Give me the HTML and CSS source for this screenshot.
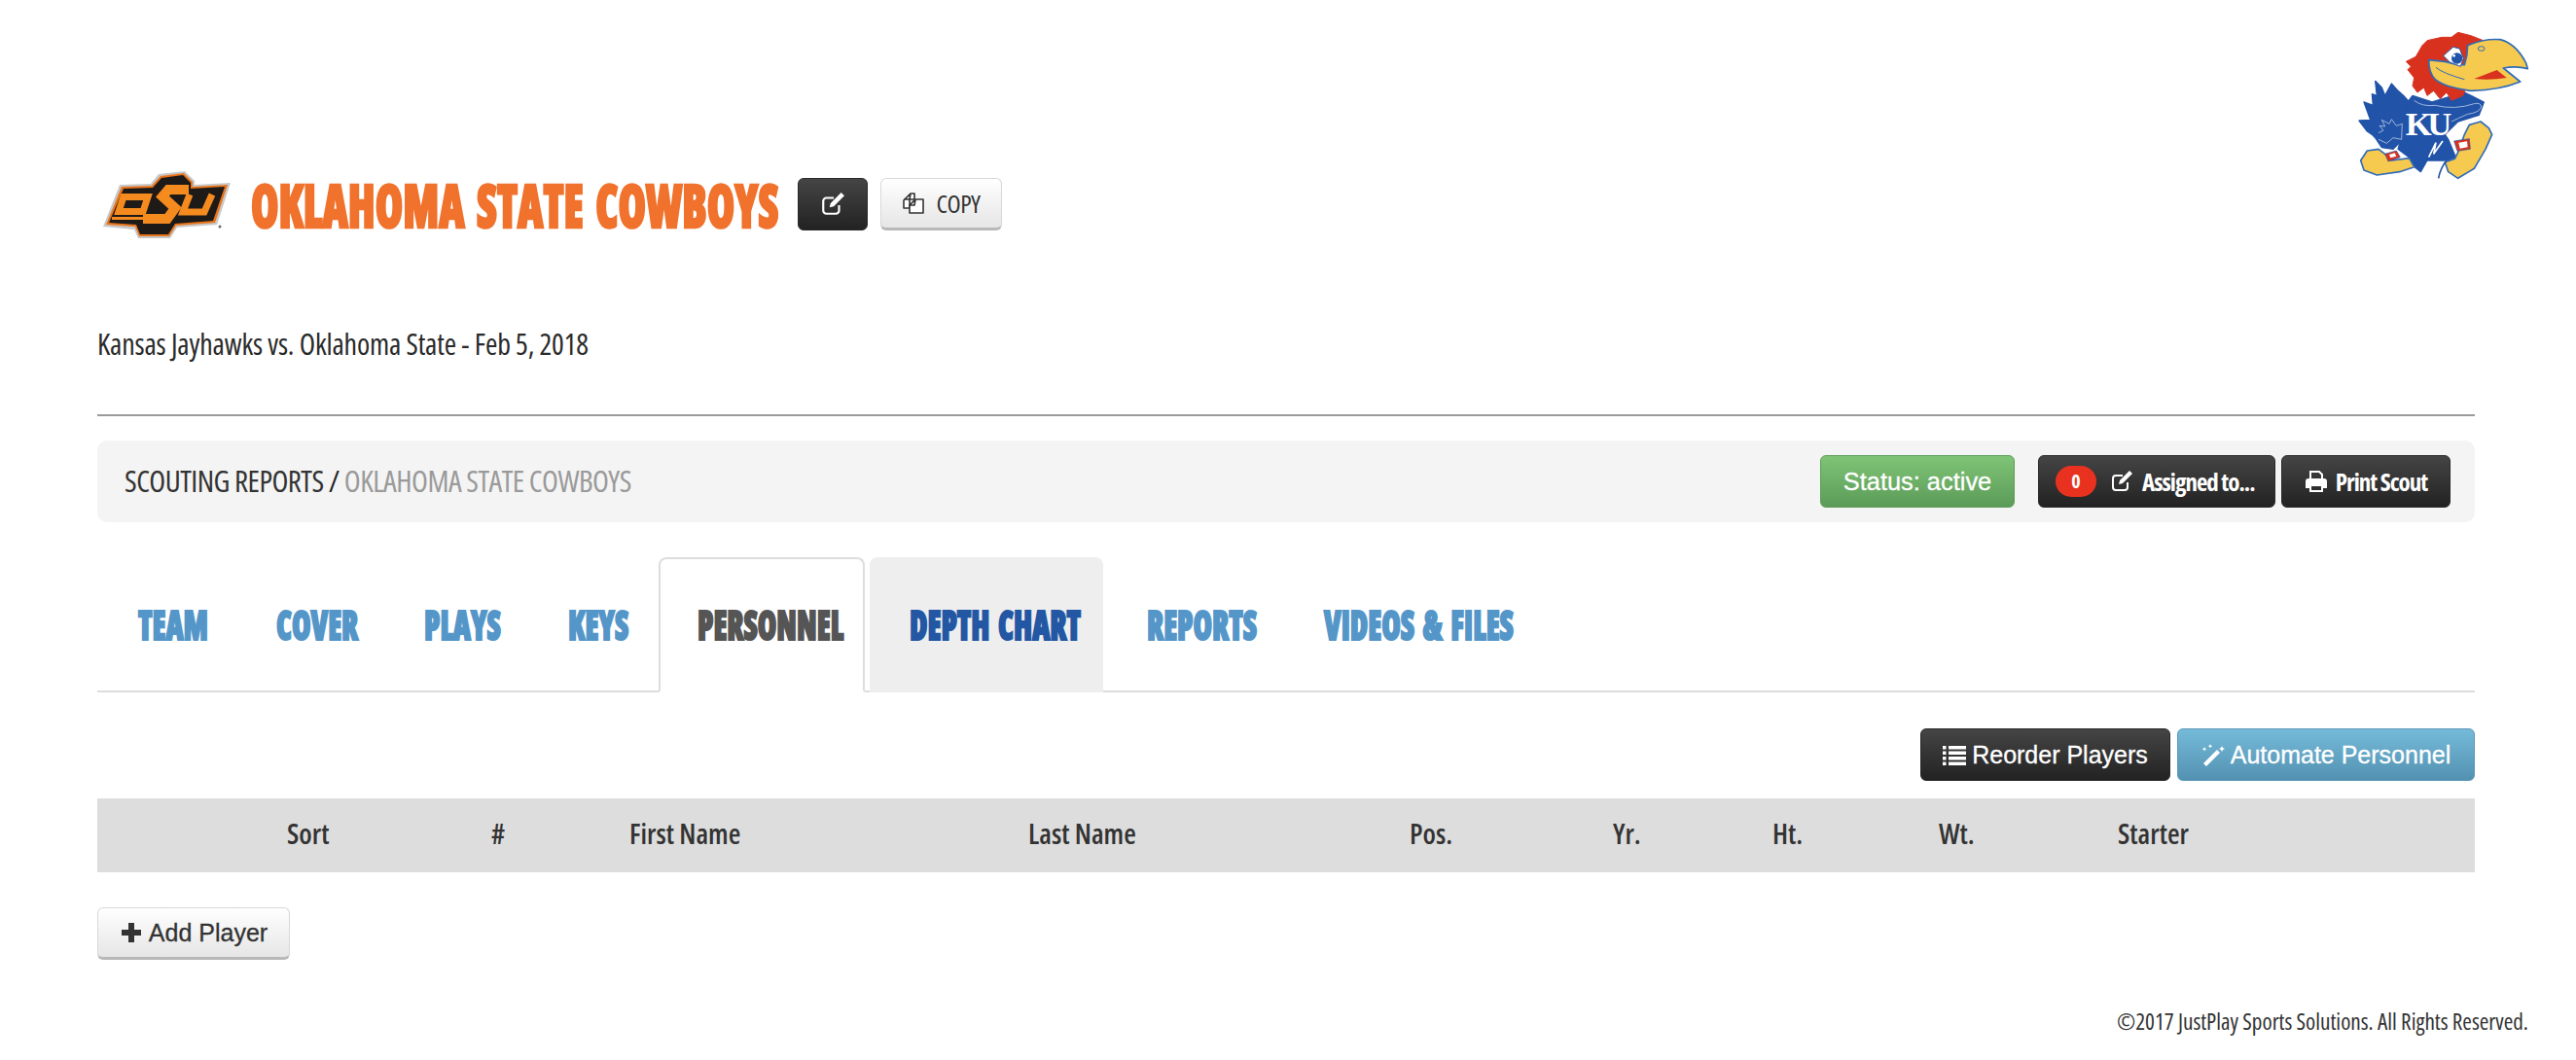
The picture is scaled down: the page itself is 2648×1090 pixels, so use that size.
FILE: index.html
```html
<!DOCTYPE html>
<html lang="en">
<head>
  <meta charset="UTF-8">
  <title>Oklahoma State Cowboys · Scouting Report</title>
  <link rel="stylesheet" href="styles.css">
</head>
<body>
  <div class="opponent-logo">
    <svg class="ku-logo" viewBox="0 0 720 570">
      <!-- tail -->
      <path d="M185 220 L205 240 L215 265 L235 228 L255 250 L275 268 L290 285 L280 330 L270 400 L240 430 L205 425 L185 395 L175 385 L160 375 L135 342 L170 340 L150 285 L178 295 L175 260 L190 265 Z" fill="#2153a8" stroke="#2153a8" stroke-width="4" stroke-linejoin="round"/>
      <!-- body -->
      <path d="M285 285 L300 265 L360 285 L460 255 L520 285 L505 325 L440 345 L400 385 L410 400 L435 460 L395 465 L345 465 L325 500 L300 480 L295 460 L255 430 L270 380 Z" fill="#2153a8" stroke="#2153a8" stroke-width="4" stroke-linejoin="round"/>
      <path d="M195 380 L210 372 L198 358 L215 360 L205 340 L228 352 L235 338 L250 358 L268 352 L266 400 L240 395 L220 412 L195 400" fill="none" stroke="#b9c9e6" stroke-width="2.500"/>
      <path d="M305 280 Q330 300 370 295 Q430 310 490 290 Q510 285 512 300 Q505 318 470 322 Q440 335 420 345" fill="none" stroke="#b9c9e6" stroke-width="2.500"/>
      <path d="M350 455 L372 410 L365 445 L393 405" fill="none" stroke="#fff" stroke-width="5"/>
      <text class="ku-text" x="278" y="388">KU</text>
      <!-- left foot -->
      <path d="M140 465 L160 435 L195 430 L215 445 L235 465 L290 458 L305 485 L260 500 L190 510 L150 495 Z" fill="#f6c94f" stroke="#2f6cb8" stroke-width="5" stroke-linejoin="round"/>
      <path d="M215 445 L250 435 L262 455 L225 468 Z" fill="#d8321f" stroke="#2153a8" stroke-width="2"/>
      <path d="M228 447 L245 442 L250 452 L232 457 Z" fill="#fff"/>
      <!-- right foot -->
      <path d="M400 470 L430 460 L440 440 L460 385 L475 355 L510 345 L535 365 L545 385 L525 430 L490 490 L440 520 L410 500 Z" fill="#f6c94f" stroke="#2f6cb8" stroke-width="5" stroke-linejoin="round"/>
      <path d="M428 405 L475 398 L478 430 L438 436 Z" fill="#d8321f" stroke="#2153a8" stroke-width="2"/>
      <path d="M442 410 L468 406 L470 424 L446 428 Z" fill="#fff"/>
      <path d="M405 465 Q385 490 380 520" fill="none" stroke="#2153a8" stroke-width="5"/>
      <!-- head feathers -->
      <path d="M280 160 L310 145 L330 110 L345 95 L390 85 L420 85 L440 70 L480 80 L518 95 L470 130 L460 200 L470 230 L455 265 L420 280 L405 255 L385 275 L365 250 L345 265 L335 240 L315 255 L300 235 L305 210 L285 185 L295 175 Z" fill="#d8321f" stroke="#d8321f" stroke-width="3" stroke-linejoin="round"/>
      <!-- beak -->
      <path d="M470 110 Q520 88 570 92 Q620 105 650 165 L655 182 Q620 172 580 180 L632 222 Q570 248 480 250 Q400 240 370 215 Q350 195 350 155 L400 160 L440 170 L460 170 Q470 140 470 110 Z" fill="#f6c94f" stroke="#2f6cb8" stroke-width="5" stroke-linejoin="round"/>
      <path d="M490 213 L560 186 L590 210 Q540 218 490 213 Z" fill="#d8321f"/>
      <path d="M372 178 Q390 195 460 215" fill="none" stroke="#2f6cb8" stroke-width="3"/>
      <ellipse cx="512" cy="120" rx="10" ry="7" fill="none" stroke="#2f6cb8" stroke-width="3"/>
      <!-- eye -->
      <path d="M395 142 L425 115 L445 120 L457 150 L448 175 L415 162 Z" fill="#fff" stroke="#2153a8" stroke-width="3"/>
      <circle cx="437" cy="150" r="17" fill="#2153a8"/>
      <circle cx="428" cy="142" r="4" fill="#fff"/>
    </svg>
  </div>

  <main class="page">
    <div class="team-row">
      <svg class="osu-logo" viewBox="0 0 145 80">
        <path d="M6 62 L23 19 L55 18 L63 8 L90 5 L100 15 L100 19 L137 17 L123 60 L82 63 L75 74 L42 74 L38 65 Z" fill="#c8c8c8"/>
        <path d="M9 60 L25 21 L56 20 L65 10 L89 7 L98 16 L98 21 L134 19 L121 58 L81 61 L74 72 L43 72 L39 62 Z" fill="#e8751c"/>
        <path d="M12 58 L27 23 L57 22 L66 12 L88 9 L96 17 L96 23 L131 21 L119 56 L80 59 L73 70 L44 70 L40 60 Z" fill="#1d1a18"/>
        <path d="M27 31.500 H52 L47 46.500 H22 Z" fill="none" stroke="#f58a1f" stroke-width="7"/>
        <path d="M94 24 H73 L67 31 L80 43 L72 54 H47" fill="none" stroke="#f58a1f" stroke-width="10"/>
        <path d="M15 53.500 H48" fill="none" stroke="#f58a1f" stroke-width="3"/>
        <path d="M95 29 L88 47 H110 L118 29" fill="none" stroke="#f58a1f" stroke-width="7"/>
        <circle cx="126" cy="62" r="1.500" fill="#666"/>
      </svg>
      <h1 class="team-name"><span>OKLAHOMA STATE COWBOYS</span></h1>
      <button class="btn btn-dark btn-edit">
        <svg class="icon" viewBox="0 0 24 24"><path d="M18 13v5a3 3 0 0 1-3 3H6a3 3 0 0 1-3-3V9a3 3 0 0 1 3-3h7" fill="none" stroke="currentColor" stroke-width="2"/><path d="M9 15l1-4L20 1l3 3-10 10z" fill="currentColor"/></svg>
      </button>
      <button class="btn btn-light btn-copy">
        <svg class="icon" viewBox="0 0 24 24"><path d="M9 2h4v6H8v9H2V9z M9 2L8 8H2" fill="#fff" stroke="currentColor" stroke-width="1.600" stroke-linejoin="round"/><path d="M14 8h8v14H8v-8z M14 8l-1 6H8" fill="#fff" stroke="currentColor" stroke-width="1.600" stroke-linejoin="round"/></svg>
        COPY
      </button>
    </div>

    <p class="game-line">Kansas Jayhawks vs. Oklahoma State - Feb 5, 2018</p>
    <hr class="rule">

    <div class="crumb-bar">
      <div class="crumbs">SCOUTING REPORTS <span class="slash">/</span> <span class="crumb-current">OKLAHOMA STATE COWBOYS</span></div>
      <button class="btn btn-green btn-status">Status: active</button>
      <button class="btn btn-dark btn-narrow btn-assigned">
        <span class="count">0</span>
        <svg class="icon" viewBox="0 0 24 24"><path d="M18 13v5a3 3 0 0 1-3 3H6a3 3 0 0 1-3-3V9a3 3 0 0 1 3-3h7" fill="none" stroke="currentColor" stroke-width="2"/><path d="M9 15l1-4L20 1l3 3-10 10z" fill="currentColor"/></svg>
        Assigned to...
      </button>
      <button class="btn btn-dark btn-narrow btn-print">
        <svg class="icon" viewBox="0 0 24 24"><path d="M6 2h9l3 3v5H6z M6 16h12v6H6z" fill="none" stroke="currentColor" stroke-width="2"/><path d="M1 12a3 3 0 0 1 3-3h16a3 3 0 0 1 3 3v7h-4v-4H5v4H1z" fill="currentColor"/></svg>
        Print Scout
      </button>
    </div>

    <nav class="tabs">
      <a class="tab"><span>TEAM</span></a>
      <a class="tab"><span>COVER</span></a>
      <a class="tab"><span>PLAYS</span></a>
      <a class="tab"><span>KEYS</span></a>
      <a class="tab active"><span>PERSONNEL</span></a>
      <a class="tab hover"><span>DEPTH CHART</span></a>
      <a class="tab"><span>REPORTS</span></a>
      <a class="tab"><span>VIDEOS &amp; FILES</span></a>
    </nav>

    <div class="actions">
      <button class="btn btn-dark btn-action btn-reorder">
        <svg class="icon" viewBox="0 0 24 24"><path d="M0 3h3.500v3.500H0z M6 3h18v3.500H6z M0 8.500h3.500V12H0z M6 8.500h18V12H6z M0 14h3.500v3.500H0z M6 14h18v3.500H6z M0 19.500h3.500V23H0z M6 19.500h18V23H6z" fill="currentColor"/></svg>
        Reorder Players
      </button>
      <button class="btn btn-blue btn-action btn-automate">
        <svg class="icon" viewBox="0 0 24 24"><path d="M2 21L16 7l3 3L5 24z" fill="currentColor"/><path d="M21 3l1 2 2 1-2 1-1 2-1-2-2-1 2-1z M9 1l.7 1.500 1.500.700-1.500.700L9 5.400l-.7-1.500-1.500-.700 1.500-.700z M3 4l.7 1.500 1.500.700-1.500.700L3 8.400l-.7-1.500L.8 6.200l1.500-.700z" fill="currentColor"/></svg>
        Automate Personnel
      </button>
    </div>

    <table class="players">
      <colgroup>
        <col class="c-blank"><col class="c-sort"><col class="c-num"><col class="c-first"><col class="c-last"><col class="c-pos"><col class="c-yr"><col class="c-ht"><col class="c-wt"><col>
      </colgroup>
      <thead>
        <tr><th></th><th>Sort</th><th>#</th><th>First Name</th><th>Last Name</th><th>Pos.</th><th>Yr.</th><th>Ht.</th><th>Wt.</th><th>Starter</th></tr>
      </thead>
    </table>

    <button class="btn btn-light btn-action btn-add">
      <svg class="icon" viewBox="0 0 24 24"><path d="M9 2h6v7h7v6h-7v7H9v-7H2V9h7z" fill="currentColor"/></svg>
      Add Player
    </button>
  </main>

  <footer class="footer">©2017 JustPlay Sports Solutions. All Rights Reserved.</footer>
</body>
</html>
```

FILE: styles.css
```css
* { box-sizing: border-box; }
html, body { margin: 0; height: 100%; }
body {
  position: relative;
  font-family: "Open Sans", "Liberation Sans", sans-serif;
  font-stretch: 75%;
  background: #fff;
  color: #333;
}
.page { padding: 175px 104px 0 100px; }

.opponent-logo { position: absolute; top: 10px; left: 2380px; }
.ku-logo { display: block; width: 240px; height: 190px; }
.ku-text { font-family: "Liberation Serif", serif; font-size: 104px; font-weight: bold; letter-spacing: -13px; fill: #fff; }

.team-row { display: flex; align-items: center; height: 69px; }
.osu-logo { width: 145px; height: 80px; flex: none; margin-top: 3px; }
.team-name {
  flex: none;
  width: 562px;
  margin: 0 0 0 13px;
  font-size: 62px;
  line-height: 1;
  font-weight: 800;
  white-space: nowrap;
  color: #f0722c;
}
/* no Impact here, so squeeze a heavy face */
.team-name span {
  display: inline-block;
  transform: scaleX(.74);
  transform-origin: 0 50%;
  word-spacing: 6px;
  -webkit-text-stroke: 2.5px #f0722c;
}

.btn {
  display: inline-flex;
  align-items: center;
  justify-content: center;
  border: 1px solid #c8c8c8;
  border-radius: 6px;
  font-family: "Open Sans", "Liberation Sans", sans-serif;
  font-stretch: 75%;
  height: 54px;
  padding: 0;
  white-space: nowrap;
}
.btn-dark {
  color: #fff;
  background: linear-gradient(#454545, #222);
  border-color: #2a2a2a;
}
.btn-light {
  color: #333;
  background: linear-gradient(#fff, #e6e6e6);
  border-color: #d8d8d8;
  border-bottom: 3px solid #b8b8b8;
}
.btn-green {
  color: #fff;
  background: linear-gradient(#7fc476, #5b9b58);
  border-color: #5f9c5a;
}
.btn-blue {
  color: #fff;
  background: linear-gradient(#75bad9, #5391b1);
  border-color: #5b98b8;
}
.icon { display: block; flex: none; width: 24px; height: 24px; }

.btn-edit { width: 72px; margin-left: 0; }
.btn-edit .icon { width: 26px; height: 26px; }
.btn-copy { width: 125px; margin-left: 13px; gap: 11px; font-size: 26px; letter-spacing: -.5px; }

.game-line { margin: 0; padding-top: 91px; font-size: 30px; line-height: 38px; letter-spacing: -.17px; color: #2a2a2a; }
.rule { margin: 53px 0 0; border: 0; border-top: 2px solid #9a9a9a; }

.crumb-bar {
  display: flex;
  align-items: center;
  height: 84px;
  margin-top: 25px;
  padding: 0 25px 0 28px;
  background: #f4f4f4;
  border-radius: 10px;
}
.crumbs { flex: 1; padding-bottom: 3px; font-size: 31px; letter-spacing: -.55px; color: #333; white-space: nowrap; }
.slash { color: #222; }
.crumb-current { color: #9a9a9a; }
.btn-status {
  width: 200px;
  font-family: "Liberation Sans", sans-serif;
  font-stretch: normal;
  font-size: 25.4px;
  -webkit-text-stroke: .3px #fff;
  margin-right: 24px;
}
.btn-narrow { font-size: 25px; font-weight: 700; letter-spacing: -1px; }
.btn-assigned { width: 244px; justify-content: flex-start; padding-left: 17px; gap: 9px; margin-right: 6px; }
.btn-print { width: 174px; gap: 8px; }
.count {
  flex: none;
  width: 42px;
  height: 32px;
  border-radius: 16px;
  background: #e8321f;
  font-size: 20px;
  line-height: 32px;
  letter-spacing: 0;
  text-align: center;
  margin-right: 5px;
}

.tabs {
  display: grid;
  grid-template-columns: 142px 152px 148px 135px 217px 243px 182px 1fr;
  height: 139px;
  margin-top: 36px;
  border-bottom: 2px solid #ddd;
}
.tab {
  display: flex;
  align-items: center;
  height: 139px;
  padding-left: 42px;
  padding-bottom: 2px;
  font-size: 42px;
  line-height: 1;
  font-weight: 800;
  color: #5596c9;
  white-space: nowrap;
  border-radius: 8px 8px 0 0;
}
.tab span {
  display: inline-block;
  transform: scaleX(.75);
  transform-origin: 0 50%;
  word-spacing: 4px;
  -webkit-text-stroke: 2px currentColor;
}
.tab.active {
  color: #555;
  background: #fff;
  border: 2px solid #ddd;
  border-bottom-color: #fff;
  padding-left: 38px;
  margin-right: 5px;
}
.tab.hover {
  color: #2357a4;
  background: #eee;
  padding-left: 41px;
  margin-right: 3px;
}

.actions { display: flex; justify-content: flex-end; gap: 7px; margin-top: 37px; }
.btn-action {
  font-family: "Liberation Sans", sans-serif;
  font-stretch: normal;
  font-size: 25px;
  -webkit-text-stroke: .3px currentColor;
  gap: 6px;
}
.btn-reorder { width: 257px; }
.btn-automate { width: 306px; }

.players {
  width: 100%;
  margin-top: 18px;
  border-collapse: collapse;
  table-layout: fixed;
}
.players thead tr { background: #ddd; }
.players th {
  height: 76px;
  padding: 0 0 6px;
  text-align: left;
  font-size: 29px;
  font-weight: 600;
  color: #333;
}
.c-blank { width: 195px; }
.c-sort { width: 210px; }
.c-num { width: 142px; }
.c-first { width: 410px; }
.c-last { width: 392px; }
.c-pos { width: 209px; }
.c-yr { width: 164px; }
.c-ht { width: 171px; }
.c-wt { width: 184px; }

.btn-add { width: 198px; margin-top: 36px; }

.footer {
  position: absolute;
  top: 1033px;
  right: 49px;
  font-size: 23.2px;
  line-height: 34px;
  color: #333;
  white-space: nowrap;
}
```
